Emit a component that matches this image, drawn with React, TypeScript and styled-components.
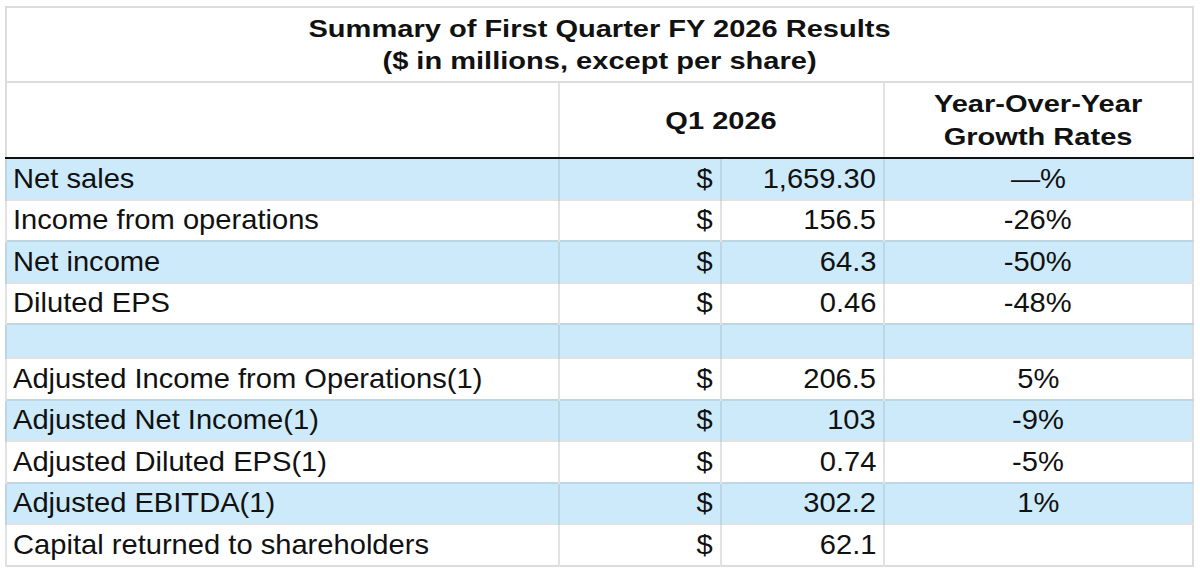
import styled, { createGlobalStyle } from "styled-components";

const GlobalStyle = createGlobalStyle`
  html, body {
    margin: 0;
    padding: 0;
    background: #fff;
  }
  body {
    font-family: "Liberation Sans", Arial, sans-serif;
    color: #111;
  }
`;

const Page = styled.div`
  padding: 6px 0 0 5px;
`;

const Table = styled.table`
  width: 1187px;
  border-collapse: collapse;
  table-layout: fixed;
  border: 2px solid #dcdcdc;
`;

// the source image is a little wider than plain Arial, so text gets stretched
const Wide = styled.span<{ $origin?: string; $k?: number }>`
  display: inline-block;
  transform: scaleX(${(p) => p.$k ?? 1.04});
  transform-origin: ${(p) => p.$origin || "left"} center;
`;

const TitleCell = styled.th`
  height: 73px;
  font-size: 24px;
  font-weight: 700;
  line-height: 32px;
  text-align: center;
  padding: 0;
  border-bottom: 2px solid #dcdcdc;
`;

const HeadCell = styled.th<{ $first?: boolean }>`
  height: 74px;
  font-size: 24px;
  font-weight: 700;
  line-height: 33px;
  text-align: center;
  padding: 0;
  border-left: ${(p) => (p.$first ? "none" : "2px solid #e2e2e2")};
  border-bottom: 2px solid #111;
`;

const Row = styled.tr<{ $shade?: boolean; $gap?: boolean }>`
  height: ${(p) => (p.$gap ? "34px" : "41.5px")};
  background: ${(p) => (p.$shade ? "#cdeafb" : "#fff")};
  td {
    border-top: 2px solid ${(p) => (p.$shade ? "#bcd6e3" : "#e2e2e2")};
    border-left: 2px solid ${(p) => (p.$shade ? "#bcd6e3" : "#e2e2e2")};
  }
`;

const Cell = styled.td<{ $align?: "left" | "right" | "center" }>`
  font-size: 28px;
  line-height: 30px;
  padding: 0 7px 0 6px;
  text-align: ${(p) => p.$align || "left"};
  white-space: nowrap;
`;

type Line = { label: string; amount?: string; growth?: string };

const rows: Line[] = [
  { label: "Net sales", amount: "1,659.30", growth: "—%" },
  { label: "Income from operations", amount: "156.5", growth: "-26%" },
  { label: "Net income", amount: "64.3", growth: "-50%" },
  { label: "Diluted EPS", amount: "0.46", growth: "-48%" },
  { label: "" },
  { label: "Adjusted Income from Operations(1)", amount: "206.5", growth: "5%" },
  { label: "Adjusted Net Income(1)", amount: "103", growth: "-9%" },
  { label: "Adjusted Diluted EPS(1)", amount: "0.74", growth: "-5%" },
  { label: "Adjusted EBITDA(1)", amount: "302.2", growth: "1%" },
  { label: "Capital returned to shareholders", amount: "62.1" },
];

export default function App() {
  return (
    <Page>
      <GlobalStyle />
      <Table>
        <colgroup>
          <col style={{ width: 553 }} />
          <col style={{ width: 162 }} />
          <col style={{ width: 163 }} />
          <col style={{ width: 309 }} />
        </colgroup>
        <thead>
          <tr>
            <TitleCell colSpan={4}>
              <Wide $origin="center" $k={1.21}>
                Summary of First Quarter FY 2026 Results
                <br />
                ($ in millions, except per share)
              </Wide>
            </TitleCell>
          </tr>
          <tr>
            <HeadCell $first />
            <HeadCell colSpan={2}>
              <Wide $origin="center" $k={1.21}>Q1 2026</Wide>
            </HeadCell>
            <HeadCell>
              <Wide $origin="center" $k={1.21}>
                Year-Over-Year
                <br />
                Growth Rates
              </Wide>
            </HeadCell>
          </tr>
        </thead>
        <tbody>
          {rows.map((r, i) => (
            <Row key={i} $shade={i % 2 === 0} $gap={!r.label}>
              <Cell>
                <Wide>{r.label}</Wide>
              </Cell>
              <Cell $align="right">
                {r.amount && <Wide $origin="right">$</Wide>}
              </Cell>
              <Cell $align="right">
                {r.amount && <Wide $origin="right">{r.amount}</Wide>}
              </Cell>
              <Cell $align="center">
                {r.growth && <Wide $origin="center">{r.growth}</Wide>}
              </Cell>
            </Row>
          ))}
        </tbody>
      </Table>
    </Page>
  );
}
